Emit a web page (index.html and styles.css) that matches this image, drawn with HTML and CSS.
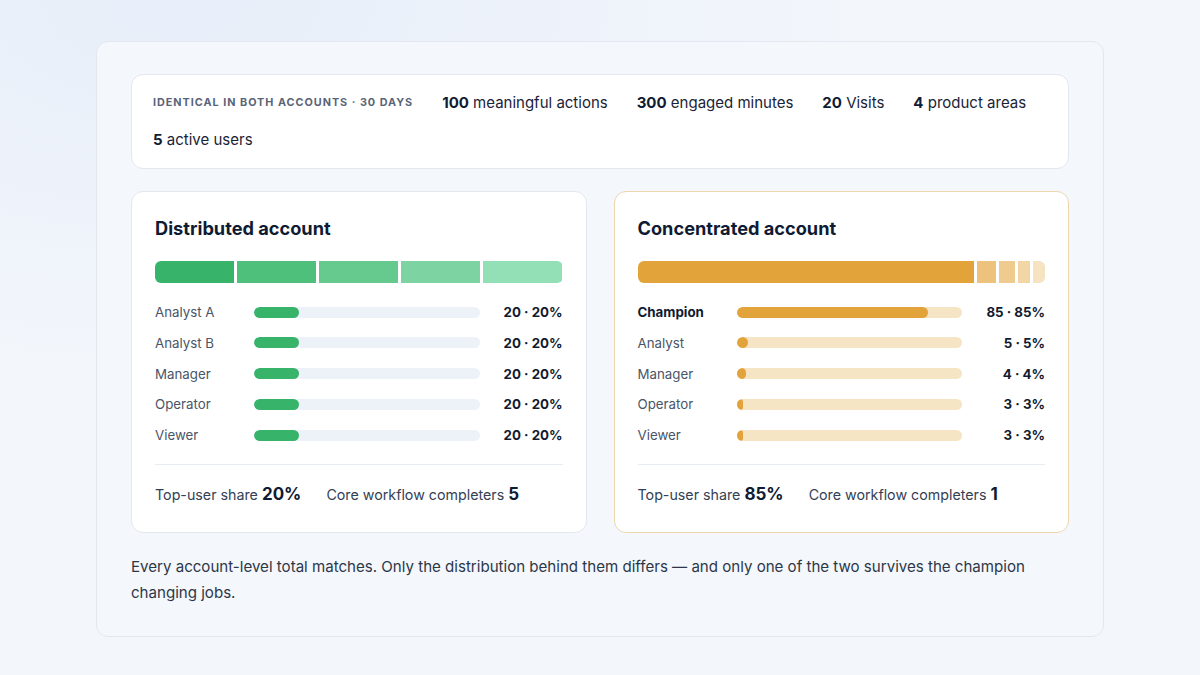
FILE: index.html
```html
<!DOCTYPE html>
<html lang="en">
<head>
<meta charset="utf-8">
<title>Distributed vs concentrated account</title>
<link rel="stylesheet" href="styles.css">
</head>
<body>
<main class="panel">
  <section class="strip">
    <span class="strip-label">Identical in both accounts · 30 days</span>
    <span class="stat"><b>100</b> meaningful actions</span>
    <span class="stat"><b>300</b> engaged minutes</span>
    <span class="stat"><b>20</b> Visits</span>
    <span class="stat"><b>4</b> product areas</span>
    <span class="stat"><b>5</b> active users</span>
  </section>

  <section class="cards">
    <article class="card green">
      <h2 class="card-title">Distributed account</h2>
      <div class="stack">
        <span class="seg g1" style="flex-grow:20"></span>
        <span class="seg g2" style="flex-grow:20"></span>
        <span class="seg g3" style="flex-grow:20"></span>
        <span class="seg g4" style="flex-grow:20"></span>
        <span class="seg g5" style="flex-grow:20"></span>
      </div>
      <div class="rows">
        <span class="name">Analyst A</span><span class="track"><span class="fill" style="width:20%"></span></span><span class="val">20 · 20%</span>
        <span class="name">Analyst B</span><span class="track"><span class="fill" style="width:20%"></span></span><span class="val">20 · 20%</span>
        <span class="name">Manager</span><span class="track"><span class="fill" style="width:20%"></span></span><span class="val">20 · 20%</span>
        <span class="name">Operator</span><span class="track"><span class="fill" style="width:20%"></span></span><span class="val">20 · 20%</span>
        <span class="name">Viewer</span><span class="track"><span class="fill" style="width:20%"></span></span><span class="val">20 · 20%</span>
      </div>
      <div class="foot">
        <span>Top-user share <b>20%</b></span>
        <span>Core workflow completers <b>5</b></span>
      </div>
    </article>

    <article class="card amber">
      <h2 class="card-title">Concentrated account</h2>
      <div class="stack">
        <span class="seg a1" style="flex-grow:85"></span>
        <span class="seg a2" style="flex-grow:5"></span>
        <span class="seg a3" style="flex-grow:4"></span>
        <span class="seg a4" style="flex-grow:3"></span>
        <span class="seg a5" style="flex-grow:3"></span>
      </div>
      <div class="rows">
        <span class="name top">Champion</span><span class="track"><span class="fill" style="width:85%"></span></span><span class="val">85 · 85%</span>
        <span class="name">Analyst</span><span class="track"><span class="fill" style="width:5%"></span></span><span class="val">5 · 5%</span>
        <span class="name">Manager</span><span class="track"><span class="fill" style="width:4%"></span></span><span class="val">4 · 4%</span>
        <span class="name">Operator</span><span class="track"><span class="fill" style="width:3%"></span></span><span class="val">3 · 3%</span>
        <span class="name">Viewer</span><span class="track"><span class="fill" style="width:3%"></span></span><span class="val">3 · 3%</span>
      </div>
      <div class="foot">
        <span>Top-user share <b>85%</b></span>
        <span>Core workflow completers <b>1</b></span>
      </div>
    </article>
  </section>

  <p class="note">Every account-level total matches. Only the distribution behind them differs — and only one of the two survives the champion changing jobs.</p>
</main>
</body>
</html>
```

FILE: styles.css
```css
* { box-sizing: border-box; }

html, body { height: 100%; }

body {
  margin: 0;
  font-family: Inter, "Noto Sans", "Liberation Sans", sans-serif;
  color: #0f1b33;
  background:
    radial-gradient(ellipse 700px 380px at 180px 0px, #e7eef9 0%, rgba(231,238,249,0) 100%),
    #f3f6fb;
  padding: 41px 96px 40px;
}

.panel {
  background: #f4f7fc;
  border: 1px solid #e3e8f0;
  border-radius: 12px;
  padding: 32px 34px 30px;
}

.strip {
  background: #fff;
  border: 1px solid #e2e8f0;
  border-radius: 12px;
  padding: 17px 22px 17px 21px;
  display: flex;
  flex-wrap: wrap;
  align-items: center;
  column-gap: 29px;
  row-gap: 15px;
}

.strip-label {
  font-size: 10.8px;
  font-weight: 700;
  letter-spacing: 0.092em;
  text-transform: uppercase;
  color: #5a6478;
  line-height: 22px;
}

.stat {
  font-size: 15px;
  line-height: 22px;
  color: #1a2336;
}

.stat b { font-weight: 700; color: #0f1b33; }

.cards {
  margin-top: 22px;
  display: grid;
  grid-template-columns: 1fr 1fr;
  gap: 27px;
}

.card {
  background: #fff;
  border: 1px solid #e2e8f0;
  border-radius: 12px;
  padding: 23px 23px 25px;
}

.card.amber { border-color: #ebd6ad; }

.card-title {
  margin: 0;
  font-size: 18.2px;
  font-weight: 650;
  line-height: 26px;
  color: #0f1b33;
}

.stack {
  margin-top: 20px;
  height: 22px;
  display: flex;
  gap: 3px;
  border-radius: 6px;
  overflow: hidden;
}

.seg { flex-basis: 0; flex-shrink: 1; }

.g1 { background: #38b36a; }
.g2 { background: #4fbf7c; }
.g3 { background: #66ca8f; }
.g4 { background: #7dd4a2; }
.g5 { background: #94e0b6; }

.a1 { background: #e2a33b; }
.a2 { background: #ecc27d; }
.a3 { background: #efcb8f; }
.a4 { background: #f2d6a6; }
.a5 { background: #f5e3c2; }

.rows {
  margin-top: 19px;
  display: grid;
  grid-template-columns: 99px 1fr 83px;
  align-items: center;
  row-gap: 10.8px;
}

.name {
  font-size: 13.3px;
  line-height: 20px;
  color: #4a5568;
}

.name.top { font-weight: 700; color: #0f1b33; }

.track {
  height: 11px;
  border-radius: 6px;
  overflow: hidden;
  display: block;
}

.green .track { background: #edf2f8; }
.amber .track { background: #f6e5c5; }

.fill {
  display: block;
  height: 100%;
  border-radius: 6px;
}

.green .fill { background: #38b36a; }
.amber .fill { background: #e2a33b; }

.val {
  text-align: right;
  font-size: 13.3px;
  font-weight: 650;
  line-height: 20px;
  color: #121b30;
}

.foot {
  margin-top: 19px;
  border-top: 1px solid #e8edf3;
  padding-top: 17px;
  display: flex;
  gap: 25px;
  font-size: 14.25px;
  line-height: 24px;
  color: #334155;
}

.foot b {
  font-size: 17px;
  font-weight: 700;
  color: #0f1b33;
}

.note {
  margin: 21px 0 0;
  font-size: 15.08px;
  line-height: 26px;
  color: #2d3748;
}
```
